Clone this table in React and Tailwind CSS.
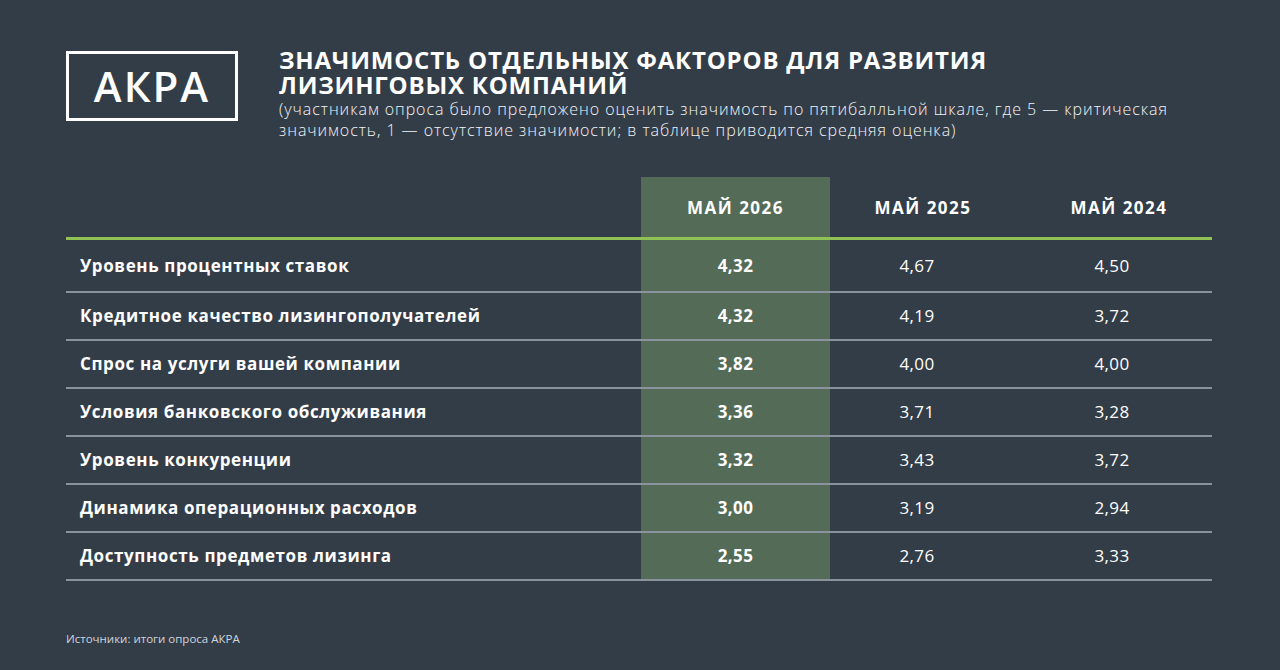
import React from 'react';

const rows = [
  ['Уровень процентных ставок', '4,32', '4,67', '4,50'],
  ['Кредитное качество лизингополучателей', '4,32', '4,19', '3,72'],
  ['Спрос на услуги вашей компании', '3,82', '4,00', '4,00'],
  ['Условия банковского обслуживания', '3,36', '3,71', '3,28'],
  ['Уровень конкуренции', '3,32', '3,43', '3,72'],
  ['Динамика операционных расходов', '3,00', '3,19', '2,94'],
  ['Доступность предметов лизинга', '2,55', '2,76', '3,33'],
];

const App = () => {
  return (
    <div
      className="w-[1280px] h-[670px] bg-[#333d48] text-white overflow-hidden"
      style={{ fontFamily: '"Open Sans", "Noto Sans", sans-serif' }}
    >
      {/* Header */}
      <div className="flex pt-[51px] pl-[66px]">
        <div className="w-[172px] h-[70px] border-[3px] border-white flex items-center justify-center shrink-0">
          <span className="text-[42px] font-semibold tracking-[2px] leading-none">АКРА</span>
        </div>
        <div className="ml-[41px] -mt-[4px]">
          <h1 className="text-[24px] font-bold leading-[25px] tracking-[0.8px]">
            <span className="block">ЗНАЧИМОСТЬ ОТДЕЛЬНЫХ ФАКТОРОВ ДЛЯ РАЗВИТИЯ</span>
            <span className="block">ЛИЗИНГОВЫХ КОМПАНИЙ</span>
          </h1>
          <p className="text-[16px] font-light leading-[21px] tracking-[0.95px] text-gray-100 mt-[2px]">
            (участникам опроса было предложено оценить значимость по пятибалльной шкале, где 5 — критическая
            <br />
            значимость, 1 — отсутствие значимости; в таблице приводится средняя оценка)
          </p>
        </div>
      </div>

      {/* Table */}
      <div className="ml-[66px] mt-[36px] w-[1146px]">
        <div className="grid grid-cols-[575px_189px_174px_208px]">
          <div className="h-[60px]" />
          <div className="h-[60px] bg-[#546b58] flex items-center justify-center pt-[2px] text-[17px] font-bold tracking-[1.5px]">
            МАЙ 2026
          </div>
          <div className="h-[60px] flex items-center justify-center pt-[2px] pl-[12px] text-[17px] font-bold tracking-[1.5px]">
            МАЙ 2025
          </div>
          <div className="h-[60px] flex items-center justify-center pt-[2px] pl-[22px] text-[17px] font-bold tracking-[1.5px]">
            МАЙ 2024
          </div>
        </div>
        <div className="h-[3px] bg-[#8fc155]" />
        {rows.map((r, i) => (
          <div key={i}>
            <div className={`grid grid-cols-[575px_189px_174px_208px] ${i === 0 ? 'h-[51px]' : 'h-[46px]'}`}>
              <div className="flex items-center pl-[14px] text-[17px] font-bold tracking-[0.6px]">{r[0]}</div>
              <div className="bg-[#546b58] flex items-center justify-center text-[17px] font-bold tracking-[0.4px]">{r[1]}</div>
              <div className="flex items-center justify-center text-[17px] tracking-[0.4px]">{r[2]}</div>
              <div className="flex items-center justify-center pl-[8px] text-[17px] tracking-[0.4px]">{r[3]}</div>
            </div>
            <div className="h-[2px] bg-[#8a939b]" />
          </div>
        ))}
      </div>

      <div className="ml-[66px] mt-[49px] text-[11.5px] text-gray-300">Источники: итоги опроса АКРА</div>
    </div>
  );
};

export default App;
